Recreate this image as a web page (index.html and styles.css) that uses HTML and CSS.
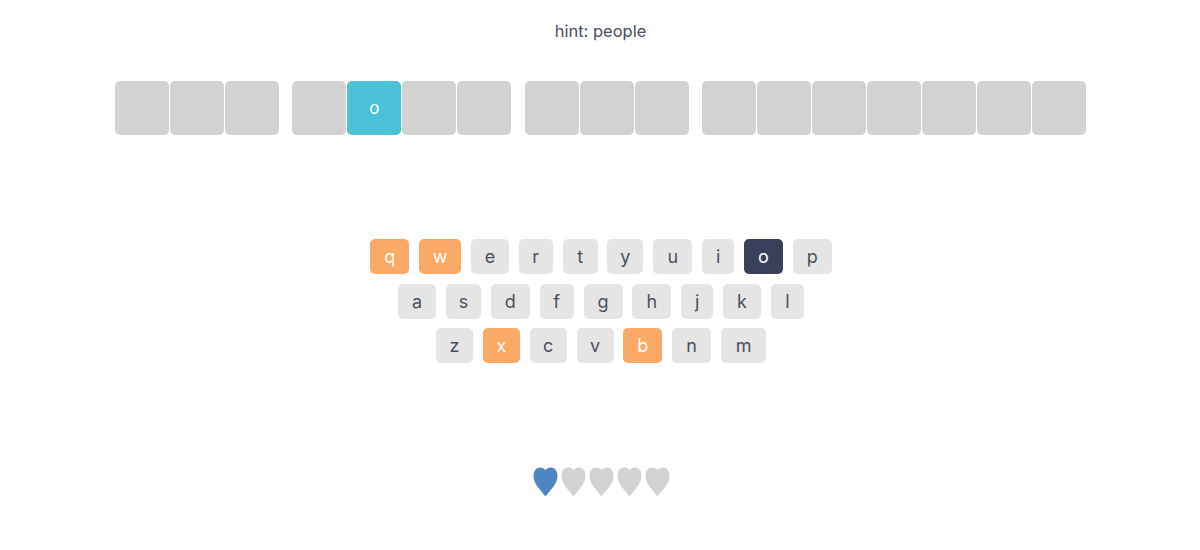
FILE: index.html
```html
<!DOCTYPE html>
<html lang="en">
<head>
  <meta charset="UTF-8">
  <title>Hangman</title>
  <link rel="stylesheet" href="styles.css">
</head>
<body>
  <div id="game">
    <p class="hint">hint: people</p>

    <div class="phrase">
      <div class="word">
        <div class="tile"></div><div class="tile"></div><div class="tile"></div>
      </div>
      <div class="word">
        <div class="tile"></div><div class="tile tile-found">o</div><div class="tile"></div><div class="tile"></div>
      </div>
      <div class="word">
        <div class="tile"></div><div class="tile"></div><div class="tile"></div>
      </div>
      <div class="word">
        <div class="tile"></div><div class="tile"></div><div class="tile"></div><div class="tile"></div><div class="tile"></div><div class="tile"></div><div class="tile"></div>
      </div>
    </div>

    <div class="keyboard">
      <div class="key-row">
        <button class="key w39 wrong">q</button>
        <button class="key w42 wrong">w</button>
        <button class="key w38">e</button>
        <button class="key w34">r</button>
        <button class="key w35">t</button>
        <button class="key w36">y</button>
        <button class="key w39">u</button>
        <button class="key w32">i</button>
        <button class="key w39 correct">o</button>
        <button class="key w39">p</button>
      </div>
      <div class="key-row">
        <button class="key w38">a</button>
        <button class="key w35">s</button>
        <button class="key w39">d</button>
        <button class="key w34">f</button>
        <button class="key w39">g</button>
        <button class="key w39">h</button>
        <button class="key w32">j</button>
        <button class="key w38">k</button>
        <button class="key w33">l</button>
      </div>
      <div class="key-row">
        <button class="key w37">z</button>
        <button class="key w37 wrong">x</button>
        <button class="key w37">c</button>
        <button class="key w37">v</button>
        <button class="key w39 wrong">b</button>
        <button class="key w39">n</button>
        <button class="key w45">m</button>
      </div>
    </div>

    <svg class="defs" aria-hidden="true">
      <symbol id="heart" viewBox="0 0 25 30">
        <path d="M12.5 29.5C7.500 22.500 .5 17 .5 9 .5 4 3.300 .5 7 .5c2.500 0 4.500 1 5.500 2.800C13.500 1.500 15.500 .5 18 .5c3.700 0 6.500 3.500 6.500 8.500 0 8-7 13.500-12 20.500z"/>
      </symbol>
    </svg>

    <div class="lives">
      <svg class="heart heart-left"><use href="#heart"/></svg>
      <svg class="heart"><use href="#heart"/></svg>
      <svg class="heart"><use href="#heart"/></svg>
      <svg class="heart"><use href="#heart"/></svg>
      <svg class="heart"><use href="#heart"/></svg>
    </div>
  </div>
</body>
</html>
```

FILE: styles.css
```css
body {
  margin: 0;
  background: #fff;
  color: #4a4f60;
  font-family: Inter, "Open Sans", sans-serif;
}
#game {
  display: flex;
  flex-direction: column;
  align-items: center;
  padding: 21px 0 0 1px;
}
.hint {
  margin: 0;
  font-size: 16.5px;
  line-height: 20px;
}
.phrase {
  display: flex;
  gap: 13.33px;
  margin-top: 40px;
}
.word {
  display: flex;
  gap: 1px;
}
.tile {
  width: 54px;
  height: 54px;
  display: flex;
  align-items: center;
  justify-content: center;
  background: #d2d2d2;
  border-radius: 5px;
  font-size: 17px;
}
.tile-found {
  background: #4ac1d6;
  color: #fff;
}
.keyboard {
  display: flex;
  flex-direction: column;
  gap: 9.7px;
  margin: 104px 0 0 1px;
}
.key-row {
  display: flex;
  justify-content: center;
  gap: 9.85px;
}
.key {
  height: 35px;
  padding: 0;
  border: 0;
  border-radius: 5px;
  background: #e5e5e5;
  color: #4a4f60;
  font-family: inherit;
  font-size: 18px;
}
.wrong {
  background: #faa966;
  color: #fff;
}
.correct {
  background: #3a3f5c;
  color: #fff;
}
.w32 { width: 32px; }
.w33 { width: 33px; }
.w34 { width: 34px; }
.w35 { width: 35px; }
.w36 { width: 36px; }
.w37 { width: 37px; }
.w38 { width: 38px; }
.w39 { width: 39px; }
.w42 { width: 42px; }
.w45 { width: 45px; }
.defs {
  display: none;
}
.lives {
  display: flex;
  gap: 3px;
  margin: 104px 0 0 2px;
}
.heart {
  width: 25px;
  height: 30px;
  fill: #d2d2d2;
}
.heart-left {
  fill: #4d86c2;
}
```
